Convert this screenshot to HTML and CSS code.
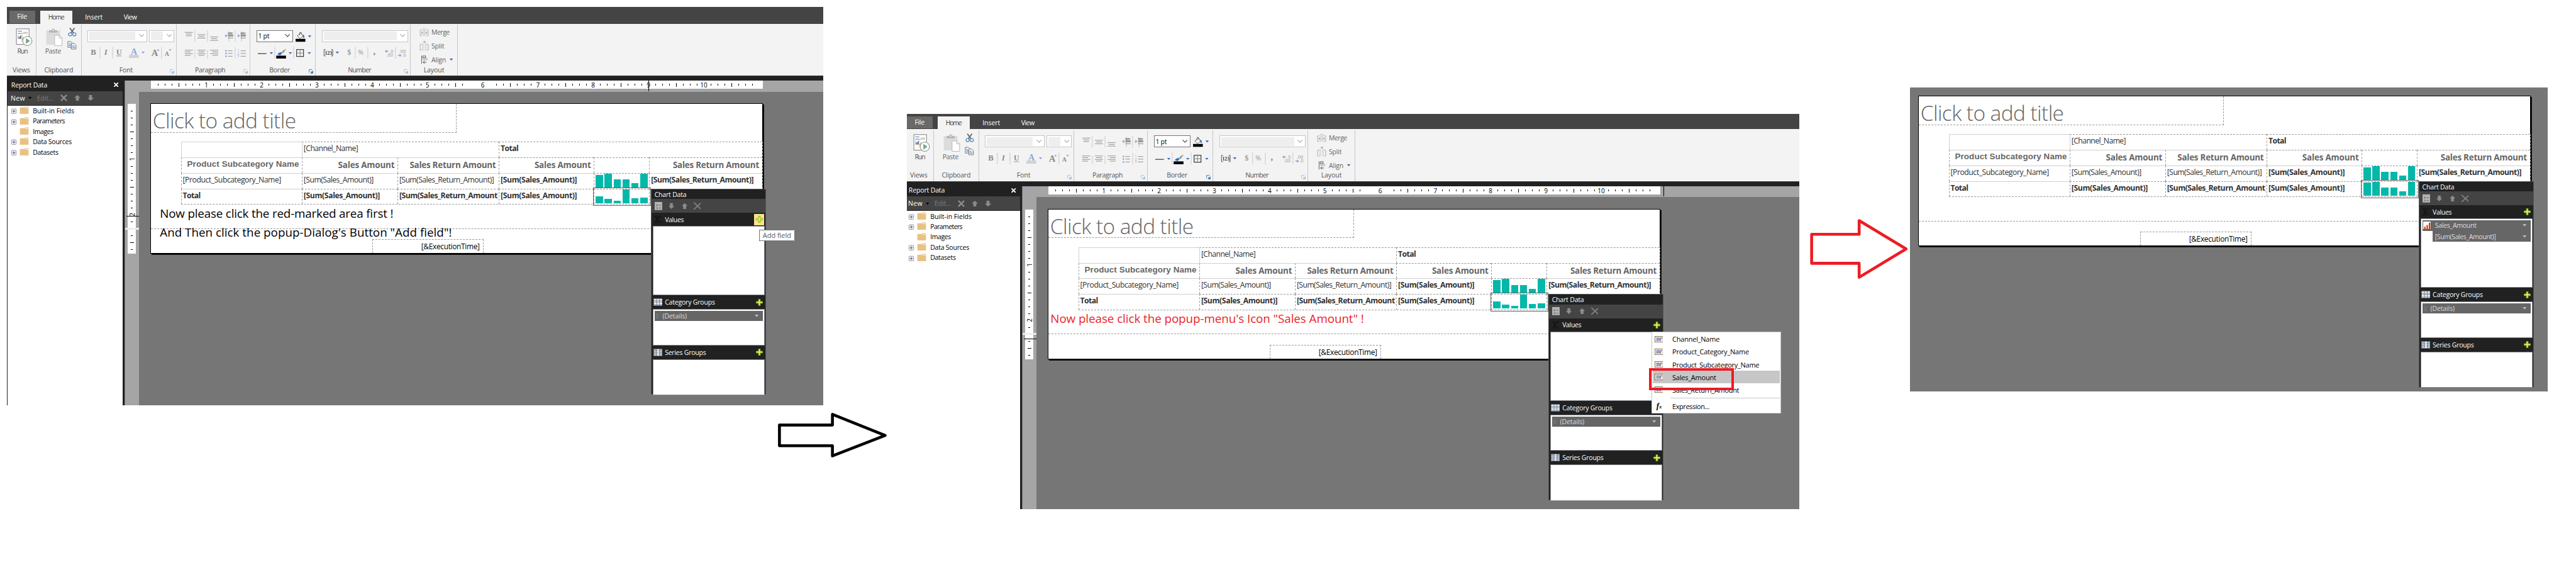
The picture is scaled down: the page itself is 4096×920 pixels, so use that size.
FILE: index.html
```html
<!DOCTYPE html>
<html lang="en">
<head>
<meta charset="utf-8">
<title>Report Builder walkthrough</title>
<link rel="stylesheet" href="styles.css">
</head>
<body>
<main class="stage">
  <section class="window window-first" data-step="1"></section>
  <svg class="arrow arrow-black" viewBox="1340 700 210 110"><path d="M1353.500 737.500H1445.500V719L1537 755.500L1445.500 791V773.500H1353.500Z"/></svg>
  <section class="window window-second" data-step="2"></section>
  <svg class="arrow arrow-red" viewBox="3135 370 180 124"><path d="M3145.500 406.300H3228V382.500L3309.500 431.700L3228 481V456.700H3145.500Z"/></svg>
  <section class="window window-third" data-step="3"></section>
</main>
<script src="script.js"></script>
</body>
</html>
```
FILE: styles.css
```css
* { box-sizing: border-box; }
body { margin: 0; background: #fff; overflow: hidden; font-family: "Open Sans", "Noto Sans", sans-serif; }
svg { display: block; flex: none; }
[data-w] { display: inline-block; white-space: nowrap; }

.stage { position: relative; width: 4472px; height: 1004px; zoom: 0.91592; font-size: 11.5px; color: #000; }

/* windows on the board */
.window { position: absolute; overflow: hidden; }
.window-first { left: 12px; top: 12px; width: 1417px; height: 691px; }
.window-second { left: 1574px; top: 198px; width: 1550px; height: 685px; }
.window-third { left: 3316px; top: 152px; width: 1107px; height: 527px; background: #767676; padding: 14px; }
.window-second .frame { margin: -3px 0 0 -4px; }
.frame { display: flex; flex-direction: column; height: 691px; }
.arrow { position: absolute; fill: none; stroke-width: 5; stroke-linejoin: round; }
.arrow-black { left: 1340px; top: 700px; width: 210px; height: 110px; stroke: #000; }
.arrow-red { left: 3135px; top: 370px; width: 180px; height: 124px; stroke: #ed1c24; }

/* tab strip */
.tabs { display: flex; align-items: flex-end; height: 29px; flex: none; background: #444; color: #fff; }
.tab { height: 22px; line-height: 22px; text-align: center; }
.tab-file { width: 45px; height: 21px; line-height: 20px; margin: 0 9px 1px 4px; background: #696969; }
.tab-home { width: 56px; background: #f3f3f3; color: #444; }
.tab-insert { width: 74px; }
.tab-view { width: 53px; }

/* ribbon */
.ribbon { display: flex; height: 90px; flex: none; background: #f3f3f3; color: #555; }
.group { display: flex; flex-direction: column; position: relative; height: 88px; margin-top: 2px; border-right: 1px solid #c6c6c6; }
.group-body { height: 69px; }
.group-label { text-align: center; line-height: 19px; height: 19px; }
.group .launcher { position: absolute; right: 3px; bottom: 3px; }
.g-views { width: 51px; } .g-clip { width: 79px; } .g-font { width: 165px; } .g-para { width: 128px; }
.g-border { width: 113px; } .g-number { width: 165px; } .g-layout { width: 82px; }
.g-font .group-label { padding-right: 10px; }
.g-para .group-label, .g-border .group-label, .g-number .group-label { padding-right: 11px; }
.group svg text { font-size: 11.5px; fill: #666; }
.combos { display: flex; gap: 4px; padding: 9px 0 0 10px; height: 35px; }
.combo { display: flex; align-items: center; justify-content: space-between; height: 21px; border: 1px solid #c6c6c6; background: #fff; padding: 0 4px 0 2px; }
.combo i { height: 15px; background: #eee; }
.combo svg { width: 9px; height: 6px; fill: none; stroke: #aaa; stroke-width: 1.2; }
.combo.on { border-color: #767676; color: #000; }
.combo.on svg { stroke: #444; }

/* body */
.body { display: flex; flex: 1; border-top: 1px solid #444; background: #212121; padding-left: 1px; }
.sidebar { width: 200px; flex: none; display: flex; flex-direction: column; }
.side-head { display: flex; justify-content: space-between; align-items: center; height: 26px; padding: 4px 7px 0 6.500px; color: #fff; }
.side-tools { display: flex; align-items: center; height: 24px; background: #444; color: #fff; padding-left: 5.500px; }
.side-tools .dim { color: #7c7c7c; margin-left: 9px; }
.side-tools svg { margin-left: 6px; }
.side-tools .cross { margin-left: 11px; }
.side-tools svg + svg { margin-left: 12px; }
.tree { flex: 1; margin-top: 1px; background: #fff; color: #000; padding-left: 6px; }
.node { display: flex; align-items: center; height: 18px; }
.node svg { margin-right: 6px; }
.designer { flex: 1; margin: 8px 0 0 3px; border-left: 1px solid #767676; background: #a5a5a5; display: flex; flex-direction: column; }
.hruler { position: relative; height: 19px; padding-left: 45px; }
.vruler { position: relative; width: 24px; padding: 21px 5px 0; }
.ruler { background: #fff; fill: none; stroke: #000; shape-rendering: crispEdges; }
.ruler text { font-size: 11px; fill: #000; stroke: none; text-anchor: middle; }
.hmark { position: absolute; top: 0; width: 1px; height: 18px; background: #000; }
.vmark { position: absolute; left: 2px; width: 22px; height: 1px; background: #000; }
.vgap { position: absolute; left: 0; top: 236px; width: 24px; height: 3px; background: #ededed; }
.work { display: flex; flex: 1; }
.canvas { flex: 1; background: #767676; padding: 20px 0 0 20px; }

/* report page */
.page { position: relative; width: 1063px; height: 261px; border: 1px solid #000; background: #fff; box-shadow: 2px 2px 0 #000; color: #333; }
.page-title { width: 530px; height: 50px; border: 1px dashed #999; border-width: 0 1px 1px 0; font-size: 36.500px; font-weight: 300; line-height: 57px; padding-left: 3px; color: #666; }
.page-rule { position: absolute; left: 0; top: 216px; width: 1061px; border-top: 1px dashed #999; }
.exec { position: absolute; left: 384px; top: 235px; width: 194px; height: 24px; border: 1px dashed #999; border-bottom: 0; font-size: 13px; line-height: 23px; text-align: right; padding-right: 6px; color: #000; }
.note { position: absolute; font-size: 20.500px; line-height: 26px; color: #000; }
.note.red { color: #ed1c24; }
.tablix { display: grid; grid-template-columns: 210px 166px 176px 165px 96px 196px; grid-template-rows: repeat(4, 27px); width: 1010px; margin: 16px 0 0 52px; border: 0 dashed #999; border-width: 0 1px 1px 0; font-size: 13.300px; line-height: 22px; }
.cell { position: relative; border: 1px dashed #999; border-width: 1px 0 0 1px; padding-left: 2px; overflow: hidden; }
.cell.wide { grid-column: span 2; }
.cell.wide3 { grid-column: span 3; }
.cell.top { border-top: 1px solid #d0d0d0; }
.cell.left { border-left: 1px solid #d0d0d0; }
.cell.head { text-align: right; font-size: 14.600px; font-weight: 700; line-height: 25px; color: #666; padding-right: 5px; }
.cell.arial { font-family: "Liberation Sans", Arial, sans-serif; line-height: 22px; padding-right: 5px; }
.cell.bold { font-weight: 700; }
.cell.clip > span { clip-path: inset(0 7px 0 0); }
.bars { display: flex; align-items: flex-end; gap: 3px; height: 24px; }
.bars i { display: block; width: 12.500px; background: #01b8aa; }
.picked { position: absolute; left: 767px; top: 145px; width: 101px; height: 32px; border: 2px solid #666; }

/* chart data panel */
.panel { position: absolute; left: 868px; top: 147px; width: 200px; height: 358px; background: #212121; border: 1px solid #555; color: #fff; padding: 0 2px; }
.panel-title { height: 17px; line-height: 18px; padding-left: 3px; }
.panel-tools { display: flex; align-items: center; height: 24px; margin: 0 -2px; background: #444; padding-left: 5px; }
.panel-head { display: flex; align-items: center; height: 23px; padding-left: 1px; }
.panel-head.cat { height: 24px; }
.panel-head .pic { width: 20px; }
.panel-head .plus { margin-left: auto; display: flex; align-items: center; justify-content: center; width: 18px; height: 20px; }
.panel-head .plus.hot { background: #ffe08c; }
.well { background: #fff; border: 1px solid #868b94; padding: 2px; height: 63px; width: 194px; }
.well.big { height: 120px; }
.pill { display: flex; align-items: center; height: 18px; background: #666; color: #ddd; padding: 0 7px 0 1px; margin-bottom: 1px; }
.pill svg:first-child { margin-right: 6px; }
.pill svg:last-child { margin-left: auto; }
.pill.inner { margin-left: 18px; padding-left: 4px; }
.tip { position: absolute; left: 1056px; top: 218px; width: 61px; height: 20px; border: 1px solid #767676; border-right-color: #fff; background: #fff; color: #575757; line-height: 18px; padding-left: 5px; font-size: 12px; }

/* field menu */
.menu { position: absolute; left: 1047px; top: 212px; width: 225px; height: 142px; border: 1px solid #c6c6c6; background: #fff; padding: 1px; font-size: 12px; color: #000; }
.item { display: flex; align-items: center; height: 22px; padding-left: 3px; }
.item svg { margin-right: 16px; }
.item.on { background: #c6c6c6; }
.sep { border-top: 1px solid #c6c6c6; margin: 3px 0 2px 31px; }
.mark { position: absolute; left: 1043px; top: 276px; width: 147px; height: 38px; border: 5px solid #ed1c24; }
```
FILE: script.js
```js
const t = (text, w, cls = '') => `<span class="${cls}" data-w="${w}">${text}</span>`;
const tri = (x, y, c = '#3e6db5') => `<path d="M${x} ${y}h6l-3 3.500z" fill="${c}"/>`;
const rule = (x, y) => `<path d="M${x} ${y}v20" stroke="#c6c6c6"/>`;
const lines = (x, ys, len, off = []) =>
  ys.map((y, i) => `<path d="M${x + (off[i] || 0)} ${y}h${len - 2 * (off[i] || 0)}" stroke="#8a8a8a"/>`).join('');
const chevron = '<svg viewBox="0 0 9 6"><path d="M.5 .5l4 4l4-4"/></svg>';
const launcher = c => `<svg class="launcher" width="8" height="8" viewBox="0 0 8 8"><path d="M.5 6V.5H6" fill="none" stroke="${c}"/><path d="M3 3l3 3M7 3v4H3z" stroke="${c}" fill="${c}"/></svg>`;
const svg = (x, y, w, h, body) => `<svg width="${w}" height="${h}" viewBox="${x} ${y} ${w} ${h}">${body}</svg>`;
const glyph = (x, y, s, c, ch, extra = '') =>
  `<text x="${x}" y="${y}" style="font:${extra} ${s}px 'Liberation Serif',serif;fill:${c}">${ch}</text>`;
const group = (cls, label, w, body, launch = '') =>
  `<div class="group ${cls}"><div class="group-body">${body}</div><div class="group-label">${t(label, w)}</div>${launch}</div>`;

const arrowUp = '<svg width="11" height="10" viewBox="0 0 11 10"><path d="M5.500 0L11 5H8V10H3V5H0z" fill="#8c8c8c"/></svg>';
const arrowDown = '<svg width="11" height="10" viewBox="0 0 11 10"><path d="M5.500 10L0 5H3V0H8V5H11z" fill="#8c8c8c"/></svg>';

function ribbon() {
  const views = svg(12, 43, 50, 69, `
    <rect x="28.500" y="50.500" width="22" height="27" fill="#fff" stroke="#767676"/>
    <path d="M31 54.500h7M31 58.500h7" stroke="#3e6db5"/><path d="M40 56.500h8M31 58.500h17" stroke="#aaa"/>
    <path d="M31.500 62v5.500h6" fill="none" stroke="#999"/><path d="M33.500 67v-3M36 67v-5" stroke="#3e6db5" stroke-width="2"/>
    <path d="M38 63v-2" stroke="#e8b96a" stroke-width="2"/><path d="M36 70a5 5 0 0 0 4 4z" fill="#e8b96a"/><path d="M39 64l2 0v6h-4z" fill="#e8b96a"/>
    <circle cx="47.500" cy="71.500" r="8" fill="#fff" stroke="#767676"/><path d="M45 66.500v10l7-5z" fill="#6fa68f"/>
    <text x="30" y="93" textLength="18.700" style="fill:#555">Run</text>`);
  const clip = svg(63, 43, 78, 69, `
    <rect x="80" y="53" width="24" height="25" fill="#dcdcdc"/><path d="M85 57v-4h4a3 3 0 0 1 6 0h4v4z" fill="#b4b4b4"/><circle cx="92" cy="53" r="1.200" fill="#fff"/>
    <path d="M94.500 61.500h8l5 5v13h-13z" fill="#fff" stroke="#b4b4b4"/><path d="M102.500 61.500v5h5" fill="none" stroke="#b4b4b4"/>
    <path d="M121 49l6.500 9M129 49l-6.500 9" stroke="#666" stroke-width="2"/><circle cx="121.500" cy="60" r="2.800" fill="none" stroke="#4a7ebb" stroke-width="1.300"/><circle cx="128.700" cy="60" r="2.800" fill="none" stroke="#4a7ebb" stroke-width="1.300"/>
    <path d="M117.500 72.500h5l3 3v7h-8z" fill="#fff" stroke="#666"/><path d="M119 76h3M119 78h4M119 80h4" stroke="#4a7ebb"/>
    <path d="M123.500 75.500h5l3 3v7h-8z" fill="#fff" stroke="#666"/><path d="M125 79h3M125 81h5M125 83h5" stroke="#4a7ebb"/>
    <text x="78" y="93" textLength="28">Paste</text>`);
  const font = `<div class="combos"><div class="combo" style="width:103px"><i style="width:80px"></i>${chevron}</div><div class="combo" style="width:44px"><i style="width:21px"></i>${chevron}</div></div>` +
    svg(142, 78, 164, 30,
      glyph(157.500, 96, 14, '#8a8a8a', 'B', 'bold') + rule(173.500, 82) + glyph(181, 96, 14, '#8a8a8a', 'I', 'italic bold') + rule(195.500, 82) +
      glyph(202, 95, 13, '#8a8a8a', 'U', 'bold') + '<path d="M202 97.500h9" stroke="#8a8a8a"/>' +
      glyph(227, 95, 16, '#93a9d4', 'A', 'bold') + '<rect x="224" y="96" width="17" height="5" fill="#d0d0d0"/>' + tri(245.500, 90, '#93a9d4') +
      glyph(263, 98, 16, '#8a8a8a', 'A', 'bold') + '<path d="M272 88.500l2.500-3l2.500 3z" fill="#93a9d4"/>' + rule(280.500, 82) +
      glyph(286, 98, 11, '#8a8a8a', 'A', 'bold') + '<path d="M293 86h5l-2.500 3z" fill="#93a9d4"/>');
  const ind = x => lines(x + 6, [57.500, 60.500, 63.500, 66.500], 9) + `<path d="M${x + 6} 58h7M${x + 6} 62h9" stroke="#8a8a8a" stroke-width="2"/><path d="M${x + 7.500} 55v17" stroke="#8a8a8a" stroke-dasharray="1 1"/>`;
  const para = svg(307, 43, 127, 69,
    lines(321, [56.500, 59.500, 62.500], 14, [0, 2, 2]) + rule(338.500, 53) + lines(343, [60.500, 63.500, 66.500], 14, [0, 2, 0]) + rule(360.500, 53) +
    lines(365, [64.500, 67.500, 70.500], 14, [0, 2, 0]) +
    ind(390) + '<path d="M390 62.500l4-3v6z" fill="#93a9d4"/>' + rule(408.500, 53) + ind(412) + '<path d="M417 62.500l-4-3v6z" fill="#93a9d4"/>' +
    [88, 94].map(y => `<path d="M321 ${y - .5}h14M321 ${y + 2.500}h10M343 ${y - .5}h14M345 ${y + 2.500}h10M365 ${y - .5}h14M369 ${y + 2.500}h10" stroke="#8a8a8a"/>`).join('') +
    rule(338.500, 87).replace('v20', 'v15') + rule(360.500, 87).replace('v20', 'v15') +
    [88.500, 93, 98].map((y, i) => `<circle cx="392.500" cy="${y}" r="1.500" fill="#93a9d4"/><path d="M396 ${y}h8M418 ${y}h9" stroke="#8a8a8a"/><text x="412.500" y="${y + 2}" style="font-size:5.500px;fill:#93a9d4">${i + 1}</text>`).join('') + rule(408.500, 82));
  const border = `<div class="combos"><div class="combo on" style="width:64px">${t('1 pt', 18.500)}${chevron}</div>` +
    svg(513, 52, 30, 21, `<rect x="513" y="67" width="17" height="5"/><path d="M516 62l6-5.500l4 5l-5 5z" fill="#fff" stroke="#555"/><path d="M520 61v-4a1.500 1.500 0 0 1 3 0v3" fill="none" stroke="#555"/><path d="M525 60q4-1 3 6q-3-1-3-6z" fill="#3e6db5"/>` + tri(534.500, 61)) + '</div>' +
    svg(435, 78, 112, 30, '<path d="M448 93.500h15" stroke="#000"/>' + tri(468.500, 91) + rule(477.500, 82) +
      '<g transform="translate(3 0)"><rect x="477" y="97" width="17" height="5"/><path d="M479 95q2-4 7-4l1 2q-2 4-5 3z" fill="#3e6db5"/><path d="M486 91l4-4l2 2l-3 4z" fill="#7a9cd4"/><path d="M490 87l3-2l1 2l-2 2z" fill="#e8b030"/></g>' +
      tri(501.500, 91) + rule(510.500, 82) + '<rect x="515.500" y="86.500" width="12" height="12" fill="none" stroke="#000"/><path d="M521.500 88v9M517 92.500h9" stroke="#000" stroke-dasharray="1 1"/>' + tri(534.500, 91));
  const number = `<div class="combos" style="padding-left:11px"><div class="combo" style="width:150px"><i style="width:127px"></i>${chevron}</div></div>` +
    svg(548, 78, 164, 30, '<path d="M565 86.500h-2.500v11h2.500M575 86.500h2.500v11h-2.500" fill="none" stroke="#444"/>' + glyph(563.700, 95, 8.500, '#333', '123', 'bold') + tri(582.500, 90) +
      glyph(603, 96, 13, '#999', '$', 'bold') + rule(616.500, 82) + '<text x="621.500" y="96" textLength="12" style="fill:#999">%</text>' + rule(638.500, 82) + glyph(648, 94, 16, '#888', ',', 'bold') +
      '<text x="676" y="92" style="font-size:8px;fill:#999">.0</text><text x="671" y="99" style="font-size:8px;fill:#999">.00</text><path d="M668 89.500l3-3v2h3v2h-3v2z" fill="#93a9d4"/>' + rule(686.500, 82) +
      '<text x="693" y="92" style="font-size:8px;fill:#999">.00</text><text x="698" y="99" style="font-size:8px;fill:#999">.0</text><path d="M697 96.500l-3-3v2h-3v2h3v2z" fill="#93a9d4"/>');
  const layout = svg(713, 43, 81, 69, `<g transform="translate(10.500 0)">
    <rect x="723" y="49" width="6" height="14" fill="#dcdcdc"/><path d="M722 52.500h-3v10h3M730 52.500h3v10h-3" fill="none" stroke="#aaa"/><path d="M721 55l3 2.500l-3 2.500zM731 55l-3 2.500l3 2.500z" fill="#aaa"/>
    <path d="M722 77.500h-3v10h3M730 77.500h3v10h-3" fill="none" stroke="#aaa"/><rect x="722" y="75" width="3" height="13" fill="#dcdcdc"/><rect x="727" y="75" width="3" height="13" fill="#dcdcdc"/><path d="M724 72h5l-2.500 3z" fill="#999"/>
    <path d="M721.500 97v14" stroke="#555"/><rect x="723.500" y="97.500" width="5" height="3" fill="none" stroke="#555"/><rect x="723" y="101" width="9" height="4" fill="#c8c8c8"/><path d="M730 108.500h-6M727 106l-3 2.500l3 2.500" fill="none" stroke="#555"/></g>
    <text x="749" y="60" textLength="32">Merge</text><text x="749" y="84" textLength="22.500">Split</text><text x="749" y="108" textLength="25.500">Align</text>${tri(780.500, 102)}`);
  return `<div class="tabs"><div class="tab tab-file">${t('File', 16)}</div><div class="tab tab-home">${t('Home', 27)}</div><div class="tab tab-insert">${t('Insert', 29.500)}</div><div class="tab tab-view">${t('View', 22)}</div></div>
  <div class="ribbon">${group('g-views', 'Views', 29, views)}${group('g-clip', 'Clipboard', 49, clip)}${group('g-font', 'Font', 22.500, font, launcher('#9fc0e0'))}${group('g-para', 'Paragraph', 51.700, para, launcher('#9fc0e0'))}${group('g-border', 'Border', 34.800, border, launcher('#3f7aa8'))}${group('g-number', 'Number', 39.600, number, launcher('#9fc0e0'))}${group('g-layout', 'Layout', 34.500, layout)}</div>`;
}

function sidebar() {
  const nodes = [['Built-in Fields', 70.700, 1], ['Parameters', 55, 1], ['Images', 35, 0], ['Data Sources', 66.500, 1], ['Datasets', 43.300, 1]];
  return `<aside class="sidebar"><div class="side-head">${t('Report Data', 61.500)}<svg width="8" height="8" viewBox="0 0 8 8"><path d="M.5 .5l7 7M7.500 .5l-7 7" stroke="#fff" stroke-width="2"/></svg></div>
  <div class="side-tools">${t('New', 23.500)}<svg width="6" height="4" viewBox="0 0 6 4"><path d="M0 0h6l-3 3.500z"/></svg>${t('Edit...', 28, 'dim')}<svg class="cross" width="12" height="12" viewBox="0 0 12 12"><path d="M1 1l10 10M11 1L1 11" stroke="#8c8c8c" stroke-width="2.500"/></svg>${arrowUp}${arrowDown}</div>
  <div class="tree">${nodes.map(([n, w, plus]) => `<div class="node"><svg width="32" height="15" viewBox="0 0 32 15">${plus ? '<rect x="1.500" y="4.500" width="8" height="8" rx="1" fill="#f4f4f4" stroke="#8f8f8f"/><path d="M3 8.500h5M5.500 6v5" stroke="#2c4a9c"/>' : ''}<path d="M16 2h8l1-1.500h6V13H16z" fill="#e9c282"/><path d="M25 2.500h5.500" stroke="#fff"/></svg>${t(n, w)}</div>`).join('')}</div></aside>`;
}

const minor = '1 11 1 11 1 11 1 11 1 11 1 11 1 23';
function hRuler() {
  const nums = [...Array(10)].map((_, i) => `<text x="${96 * (i + 1)}" y="11.500">${i + 1}</text>`).join('');
  return `<svg class="ruler" width="1062" height="14" viewBox="0 0 1062 14"><path d="M12 7.500H1060" stroke-width="3" stroke-dasharray="${minor}"/><path d="M48 7.500H1060" stroke-width="7" stroke-dasharray="1 95"/>${nums}</svg>`;
}
function vRuler() {
  const nums = [1, 2].map(n => `<text transform="translate(11.500 ${96 * n}) rotate(-90)">${n}</text>`).join('');
  return `<svg class="ruler" width="14" height="260" viewBox="0 0 14 260"><path d="M7.500 12V260" stroke-width="3" stroke-dasharray="${minor}"/><path d="M7.500 48V260" stroke-width="7" stroke-dasharray="1 95"/>${nums}</svg>`;
}

const high = [22, 24, 14, 14, 7, 24];
const low = [12, 7, 4, 24, 8, 9];
const bars = hs => `<div class="bars">${hs.map(h => `<i style="height:${h}px"></i>`).join('')}</div>`;

function panel(values, hot) {
  const plus = (on = '') => `<span class="plus ${on}"><svg width="12" height="12" viewBox="0 0 12 12"><path d="M4.500 .5h3v4h4v3h-4v4h-3v-4h-4v-3h4z" fill="#d9f25c" stroke="#7fae1b"/></svg></span>`;
  const grid = col => `<svg width="16" height="13" viewBox="0 0 16 13"><rect width="16" height="13" fill="#767676"/><path d="M1 2.500h14M1 5.500h14M1 8.500h14M1 11h14" stroke="#b5cbe6" stroke-width="2"/>${col ? '<path d="M8 1v11" stroke="#fff" stroke-width="4" stroke-dasharray="2 1"/>' : '<path d="M1 2.500h14M1 8.500h14" stroke="#fff" stroke-width="2"/>'}<path d="M5.500 0v13M10.500 0v13" stroke="#767676"/></svg>`;
  const down = '<svg width="7" height="4" viewBox="0 0 7 4"><path d="M0 0h7l-3.500 4z" fill="#bbb"/></svg>';
  const grip = '<svg width="7" height="8" viewBox="0 0 7 8"><path d="M1 1.500h5M1 4.500h5M1 7.500h5" stroke="#868686"/></svg>';
  const chart = '<svg width="14" height="14" viewBox="0 0 14 14"><rect width="14" height="14" fill="#fff"/><path d="M13.500 0v13.500H0" fill="none" stroke="#333"/><path d="M3 13V9M7 13V6M11 13V2" stroke="#d83b01" stroke-width="2.500"/></svg>';
  return `<div class="panel"><div class="panel-title">${t('Chart Data', 54.500)}</div>
  <div class="panel-tools"><svg width="80" height="16" viewBox="0 0 80 16"><rect x="0" y="1" width="13" height="14" fill="#b4b4b4"/><path d="M7 6.500h4M7 11.500h4" stroke="#666"/><circle cx="4" cy="6.500" r="1.300" fill="#666"/><circle cx="4" cy="11.500" r="1" fill="none" stroke="#666"/>
    <path d="M29 13l-5-5h2.500V3h5v5H34z" fill="#8c8c8c"/><path d="M52 3l5 5h-2.500v5h-5V8H47z" fill="#8c8c8c"/><path d="M68 2l13 12M81 2L68 14" stroke="#808080" stroke-width="2"/></svg></div>
  <div class="panel-head"><span class="pic"><svg width="16" height="12" viewBox="0 0 16 12"><path d="M12 3V1.500H4.500L8 6l-3.500 4.500H12V9" fill="none" stroke="#000" stroke-width="2"/><path d="M12 3V1.500H4.500L8 6l-3.500 4.500H12V9" fill="none" stroke="#888" stroke-width=".6" stroke-dasharray="1 1"/></svg></span>${t('Values', 32)}${plus(hot ? 'hot' : '')}</div>
  <div class="well big">${values ? `<div class="pill">${chart.replace('<svg', '<svg style="margin-left:1px"')}${t('Sales_Amount', 71)}${down}</div><div class="pill inner">${t('[Sum(Sales_Amount)]', 104.600)}${down}</div>` : ''}</div>
  <div class="panel-head cat"><span class="pic">${grid(false)}</span>${t('Category Groups', 86)}${plus()}</div>
  <div class="well"><div class="pill">${grip}${t('(Details)', 41)}${down}</div></div>
  <div class="panel-head cat"><span class="pic">${grid(true)}</span>${t('Series Groups', 70.500)}${plus()}</div>
  <div class="well"></div></div>`;
}

function menu() {
  const field = '<svg width="15" height="11" viewBox="0 0 15 11"><rect x=".5" y=".5" width="14" height="10" fill="#f6f1e4" stroke="#7d6a4c"/><path d="M3 3.500h5M9 3.500h4M3 5.500h2M6 5.500h5M3 7.500h4M8 7.500h3" stroke="#23238e"/></svg>';
  const fx = '<svg width="15" height="15" viewBox="0 0 15 15"><text x="3" y="11.500" style="font:italic bold 14px \'Liberation Serif\',serif">f</text><text x="8" y="12" style="font:italic bold 9px \'Liberation Serif\',serif">x</text></svg>';
  const rows = [['Channel_Name', 81], ['Product_Category_Name', 132], ['Product_Subcategory_Name', 150], ['Sales_Amount', 75], ['Sales_Return_Amount', 115]];
  return `<div class="menu">${rows.map(([n, w], i) => `<div class="item ${i === 3 ? 'on' : ''}">${field}${t(n, w)}</div>`).join('')}<div class="sep"></div><div class="item">${fx}${t('Expression...', 63.500)}</div></div><div class="mark"></div>`;
}

function page(step) {
  const notes = {
    1: `<div class="note" style="left:15.500px;top:177px">${t('Now please click the red-marked area first !', 404)}</div><div class="note" style="left:15.500px;top:210px">${t('And Then click the popup-Dialog\'s Button "Add field"!', 505.500)}</div>`,
    2: `<div class="note red" style="left:3.500px;top:176px">${t('Now please click the popup-menu\'s Icon "Sales Amount" !', 543)}</div>`,
    3: ''
  };
  const c = (cls, body) => `<div class="cell ${cls}">${body}</div>`;
  return `<article class="page"><div class="page-title">${t('Click to add title', 248)}</div>
  <div class="tablix">
    ${c('top left', '')}${c('wide left', t('[Channel_Name]', 93.600))}${c('wide3 bold', t('Total', 30))}
    ${c('head arial top', t('Product Subcategory Name', 193))}${c('head top', t('Sales Amount', 97))}${c('head top', t('Sales Return Amount', 148.700))}${c('head', t('Sales Amount', 97))}${c('', '')}${c('head', t('Sales Return Amount', 148.700))}
    ${c('top', t('[Product_Subcategory_Name]', 170))}${c('top', t('[Sum(Sales_Amount)]', 120.500))}${c('top', t('[Sum(Sales_Return_Amount)]', 163.500))}${c('top bold', t('[Sum(Sales_Amount)]', 131.500))}${c('', bars(high))}${c('top bold', t('[Sum(Sales_Return_Amount)]', 177.300))}
    ${c('top bold', t('Total', 30))}${c('bold', t('[Sum(Sales_Amount)]', 131.500))}${c('bold clip', t('[Sum(Sales_Return_Amount)]', 177.300))}${c('bold', t('[Sum(Sales_Amount)]', 131.500))}${c('', bars(step === 3 ? high : low))}${c('', '')}
  </div>
  <div class="page-rule"></div><div class="exec">${t('[&amp;ExecutionTime]', 100.600)}</div><div class="picked"></div>
  ${notes[step]}${panel(step === 3, step === 1)}${step === 1 ? `<div class="tip">${t('Add field', 48)}</div>` : ''}${step === 2 ? menu() : ''}</article>`;
}

function builder(step) {
  const [mx, my] = step === 1 ? [909, 215] : [1113, 245];
  return `<div class="frame">${ribbon()}<div class="body">${sidebar()}<div class="designer">
    <div class="hruler">${hRuler()}<span class="hmark" style="left:${mx}px"></span></div>
    <div class="work"><div class="vruler">${vRuler()}<span class="vgap"></span><span class="vmark" style="top:${my}px"></span></div><div class="canvas">${page(step)}</div></div>
  </div></div></div>`;
}

document.querySelectorAll('.window').forEach(el => {
  const step = Number(el.dataset.step);
  el.innerHTML = step === 3 ? page(3) : builder(step);
});

// Tighten or loosen the tracking so that each label keeps its designed width.
const scale = document.querySelector('.stage').getBoundingClientRect().width / 4472;
document.querySelectorAll('[data-w]').forEach(el => {
  const now = el.getBoundingClientRect().width / scale;
  const gap = (Number(el.dataset.w) + 1.200 - now) / (el.textContent.length - 1);
  el.style.letterSpacing = gap.toFixed(3) + 'px';
  el.style.marginRight = (-gap).toFixed(3) + 'px';
});
```
